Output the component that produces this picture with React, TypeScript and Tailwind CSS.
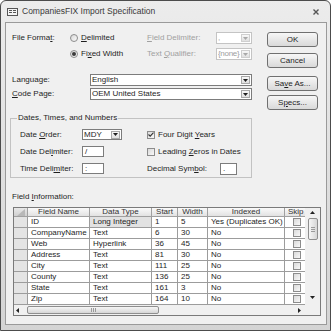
import React from 'react';

const Ak = ({ c }: { c: string }) => <span className="underline underline-offset-[1px]">{c}</span>;

const Tri = ({ dir, color = '#222' }: { dir: 'up' | 'down' | 'left' | 'right'; color?: string }) => {
  const d =
    dir === 'down' ? 'M0 0H5L2.5 3Z' : dir === 'up' ? 'M0 3H5L2.5 0Z' : dir === 'left' ? 'M3 0V5L0 2.5Z' : 'M0 0V5L3 2.5Z';
  const vert = dir === 'down' || dir === 'up';
  return (
    <svg width={vert ? 5 : 3} height={vert ? 3 : 5} viewBox={vert ? '0 0 5 3' : '0 0 3 5'}>
      <path d={d} fill={color} />
    </svg>
  );
};

const Radio = ({ checked }: { checked?: boolean }) => (
  <span className="flex h-[8px] w-[8px] shrink-0 items-center justify-center rounded-full border border-[#8c8c8c] bg-linear-to-br from-[#d8d8d8] to-[#fbfbfb]">
    {checked && <span className="h-[4px] w-[4px] rounded-full bg-[#3a3a3a]" />}
  </span>
);

const Check = ({ checked }: { checked?: boolean }) => (
  <span className="flex h-[8px] w-[8px] shrink-0 items-center justify-center border border-[#8c8c8c] bg-linear-to-br from-[#dadada] to-[#f8f8f8]">
    {checked && (
      <svg width="6" height="5" viewBox="0 0 6 5">
        <path d="M0.5 2.5L2.2 4.2L5.5 0.7" stroke="#333" strokeWidth="1.1" fill="none" />
      </svg>
    )}
  </span>
);

// combo box with the little arrow button on the right
const Combo = ({ size, text, disabled }: { size: string; text: string; disabled?: boolean }) => (
  <div
    className={`flex items-center border bg-white pl-[1px] ${size} ${
      disabled ? 'border-[#c4c4c4] text-[#a0a0a0]' : 'border-[#7c7c7c] text-[#1e1e1e]'
    }`}
  >
    <span className={`flex-1 overflow-hidden whitespace-nowrap ${disabled ? 'tracking-[-0.3px]' : ''}`}>{text}</span>
    <span
      className={`mr-[1px] flex h-[8px] w-[9px] shrink-0 items-center justify-center border bg-linear-to-b from-[#f8f8f8] to-[#e0e0e0] ${
        disabled ? 'border-[#cfcfcf]' : 'border-[#a8a8a8]'
      }`}
    >
      <Tri dir="down" color={disabled ? '#a8a8a8' : '#1e1e1e'} />
    </span>
  </div>
);

const Field = ({ size, text }: { size: string; text: string }) => (
  <div className={`flex items-center border border-[#7c7c7c] bg-white pl-[2px] ${size}`}>{text}</div>
);

const Button = ({ children, mt }: { children: React.ReactNode; mt: string }) => (
  <div
    className={`flex h-[15px] w-[51px] items-center justify-center rounded-[3px] border border-[#707070] bg-linear-to-b from-[#f7f7f7] to-[#d9d9d9] ${mt}`}
  >
    <span>{children}</span>
  </div>
);

const rows = [
  ['ID', 'Long Integer', '1', '5', 'Yes (Duplicates OK)'],
  ['CompanyName', 'Text', '6', '30', 'No'],
  ['Web', 'Hyperlink', '36', '45', 'No'],
  ['Address', 'Text', '81', '30', 'No'],
  ['City', 'Text', '111', '25', 'No'],
  ['County', 'Text', '136', '25', 'No'],
  ['State', 'Text', '161', '3', 'No'],
  ['Zip', 'Text', '164', '10', 'No'],
];

const cols = ['w-[62px]', 'w-[62px]', 'w-[26px]', 'w-[30px]', 'w-[77px]'];
const heads = ['Field Name', 'Data Type', 'Start', 'Width', 'Indexed'];

export default function App() {
  return (
    <div className="h-[333px] w-[331px] bg-white font-['Liberation_Sans',Arial,sans-serif] text-[8px] leading-none text-[#1e1e1e]">
      <div className="flex h-[331px] w-[331px] flex-col rounded-t-[6px] border border-[#4c4c4c] bg-linear-to-b from-[#ececec] to-[#d4d4d4]">
        {/* title bar */}
        <div className="flex h-[21px] shrink-0 items-center pl-[6px] pr-[11px]">
          <svg width="11" height="8" viewBox="0 0 11 8">
            <rect x="0.5" y="0.5" width="10" height="7" fill="#f4f4f4" stroke="#555" />
            <rect x="2" y="2" width="3" height="1" fill="#555" />
            <rect x="2" y="4" width="3" height="1" fill="#555" />
            <rect x="6" y="2" width="3" height="1" fill="#555" />
            <rect x="6" y="4" width="3" height="1" fill="#555" />
          </svg>
          <span className="ml-[4px] text-[8.5px] text-[#3a3a3a]">CompaniesFIX Import Specification</span>
          <svg className="ml-auto" width="6" height="6" viewBox="0 0 6 6">
            <path d="M0.5 0.5L5.5 5.5M5.5 0.5L0.5 5.5" stroke="#555" strokeWidth="1.4" />
          </svg>
        </div>

        {/* client area */}
        <div className="mb-[5px] ml-[4px] mr-[3px] flex flex-1 flex-col border border-[#9a9a9a] bg-[#f0f0f0]">
          <div className="flex pl-[6px] pt-[9px]">
            <div className="flex w-[240px] flex-col">
              <div className="flex h-[12px] items-center">
                <span className="w-[58px]">
                  File Forma<Ak c="t" />:
                </span>
                <div className="flex w-[77px] items-center">
                  <Radio />
                  <span className="ml-[3px]">
                    <Ak c="D" />
                    elimited
                  </span>
                </div>
                <span className="w-[69px] text-[#a0a0a0]">
                  <Ak c="F" />
                  ield Delimiter:
                </span>
                <Combo size="h-[12px] w-[36px]" text="," disabled />
              </div>
              <div className="mt-[4px] flex h-[12px] items-center">
                <span className="w-[58px]" />
                <div className="flex w-[77px] items-center">
                  <Radio checked />
                  <span className="ml-[3px]">
                    Fi<Ak c="x" />
                    ed Width
                  </span>
                </div>
                <span className="w-[69px] text-[#a0a0a0]">
                  Text <Ak c="Q" />
                  ualifier:
                </span>
                <Combo size="h-[12px] w-[36px]" text="{none}" disabled />
              </div>
              <div className="mt-[14px] flex h-[12px] items-center">
                <span className="w-[78px]">Language:</span>
                <Combo size="h-[12px] w-[162px]" text="English" />
              </div>
              <div className="mt-[2px] flex h-[12px] items-center">
                <span className="w-[78px]">
                  <Ak c="C" />
                  ode Page:
                </span>
                <Combo size="h-[12px] w-[162px]" text="OEM United States" />
              </div>
            </div>
            <div className="ml-[15px] flex flex-col">
              <Button mt="mt-0">OK</Button>
              <Button mt="mt-[6px]">Cancel</Button>
              <Button mt="mt-[8px]">
                Sa<Ak c="v" />e As...
              </Button>
              <Button mt="mt-[4px]">
                S<Ak c="p" />
                ecs...
              </Button>
            </div>
          </div>

          {/* group box */}
          <div className="relative ml-[4px] mt-[8px] flex h-[60px] w-[242px] border border-[#c2c2c2] pt-[10px]">
            <span className="absolute -top-[5px] left-[6px] bg-[#f0f0f0] px-[1px]">Dates, Times, and Numbers</span>
            <div className="flex w-[136px] flex-col gap-[6px] pl-[9px]">
              <div className="flex h-[11px] items-center">
                <span className="w-[62px]">
                  Date <Ak c="O" />
                  rder:
                </span>
                <Combo size="h-[11px] w-[40px]" text="MDY" />
              </div>
              <div className="flex h-[11px] items-center">
                <span className="w-[62px]">
                  Date Del<Ak c="i" />
                  miter:
                </span>
                <Field size="h-[11px] w-[22px]" text="/" />
              </div>
              <div className="flex h-[11px] items-center">
                <span className="w-[62px]">
                  Time Deli<Ak c="m" />
                  iter:
                </span>
                <Field size="h-[11px] w-[22px]" text=":" />
              </div>
            </div>
            <div className="flex flex-col gap-[6px]">
              <div className="flex h-[11px] items-center">
                <Check checked />
                <span className="ml-[3px]">
                  Four Digit <Ak c="Y" />
                  ears
                </span>
              </div>
              <div className="flex h-[11px] items-center">
                <Check />
                <span className="ml-[3px]">
                  Leading <Ak c="Z" />
                  eros in Dates
                </span>
              </div>
              <div className="flex h-[11px] items-center">
                <span className="w-[73px]">
                  Decimal Sym<Ak c="b" />
                  ol:
                </span>
                <Field size="h-[12px] w-[17px]" text="." />
              </div>
            </div>
          </div>

          <div className="mt-[14px] flex h-[10px] items-center pl-[6px]">
            <span>
              Field <Ak c="I" />
              nformation:
            </span>
          </div>

          {/* field grid */}
          <div className="ml-[7px] mt-[5px] flex w-[308px] flex-col border border-[#7a7a7a] bg-white">
            <div className="flex">
              <div className="flex w-[291px] flex-col">
                <div className="flex h-[9px] text-[#333]">
                  <div className="w-[14px] border-b border-r border-[#a0a0a0] bg-linear-to-b from-[#e8e8e8] to-[#d0d0d0]">
                    <svg width="8" height="7" viewBox="0 0 8 7" className="ml-[3px] mt-[1px]">
                      <path d="M8 0V7H0Z" fill="#b8b8b8" />
                    </svg>
                  </div>
                  {heads.map((h, i) => (
                    <div
                      key={h}
                      className={`${cols[i]} flex items-center justify-center border-b border-r border-[#a0a0a0] bg-linear-to-b from-[#fafafa] to-[#e2e2e2]`}
                    >
                      {h}
                    </div>
                  ))}
                  <div className="flex w-[20px] items-center overflow-hidden border-b border-[#a0a0a0] bg-linear-to-b from-[#fafafa] to-[#e2e2e2] pl-[3px]">
                    Skip
                  </div>
                </div>
                {rows.map((r, ri) => (
                  <div key={r[0]} className="flex h-[11px] border-b border-[#9c9c9c]">
                    <div className="w-[14px] border-r border-[#9c9c9c] bg-[#e4e4e4]" />
                    {r.map((c, ci) => (
                      <div
                        key={ci}
                        className={`${cols[ci]} flex items-center overflow-hidden whitespace-nowrap border-r border-[#9c9c9c] pl-[3px] ${
                          ri === 0 && ci === 1 ? 'bg-[#e2e2e2]' : ''
                        }`}
                      >
                        {c}
                      </div>
                    ))}
                    <div className="flex w-[20px] items-center pl-[8px]">
                      <Check />
                    </div>
                  </div>
                ))}
              </div>
              <div className="flex w-[15px] flex-col items-center bg-[#f0f0f0]">
                <div className="flex h-[9px] items-center">
                  <Tri dir="up" />
                </div>
                <div className="mt-[1px] flex h-[22px] w-[10px] flex-col items-center justify-center gap-[1px] rounded-[2px] border border-[#8e8e8e] bg-linear-to-r from-[#f6f6f6] to-[#d6d6d6]">
                  <span className="h-px w-[4px] bg-[#9a9a9a]" />
                  <span className="h-px w-[4px] bg-[#9a9a9a]" />
                  <span className="h-px w-[4px] bg-[#9a9a9a]" />
                </div>
                <div className="mb-[6px] mt-auto">
                  <Tri dir="down" />
                </div>
              </div>
            </div>
            <div className="flex h-[10px]">
              <div className="flex w-[291px] items-center bg-[#f0f0f0] pl-[2px]">
                <Tri dir="left" />
                <div className="ml-[8px] flex h-[8px] w-[132px] items-center justify-center gap-[1px] rounded-[2px] border border-[#8e8e8e] bg-linear-to-b from-[#f6f6f6] to-[#d6d6d6]">
                  <span className="h-[4px] w-px bg-[#9a9a9a]" />
                  <span className="h-[4px] w-px bg-[#9a9a9a]" />
                  <span className="h-[4px] w-px bg-[#9a9a9a]" />
                </div>
                <div className="ml-auto mr-[4px]">
                  <Tri dir="right" />
                </div>
              </div>
              <div className="w-[15px] bg-[#f0f0f0]" />
            </div>
          </div>
        </div>
      </div>
    </div>
  );
}
